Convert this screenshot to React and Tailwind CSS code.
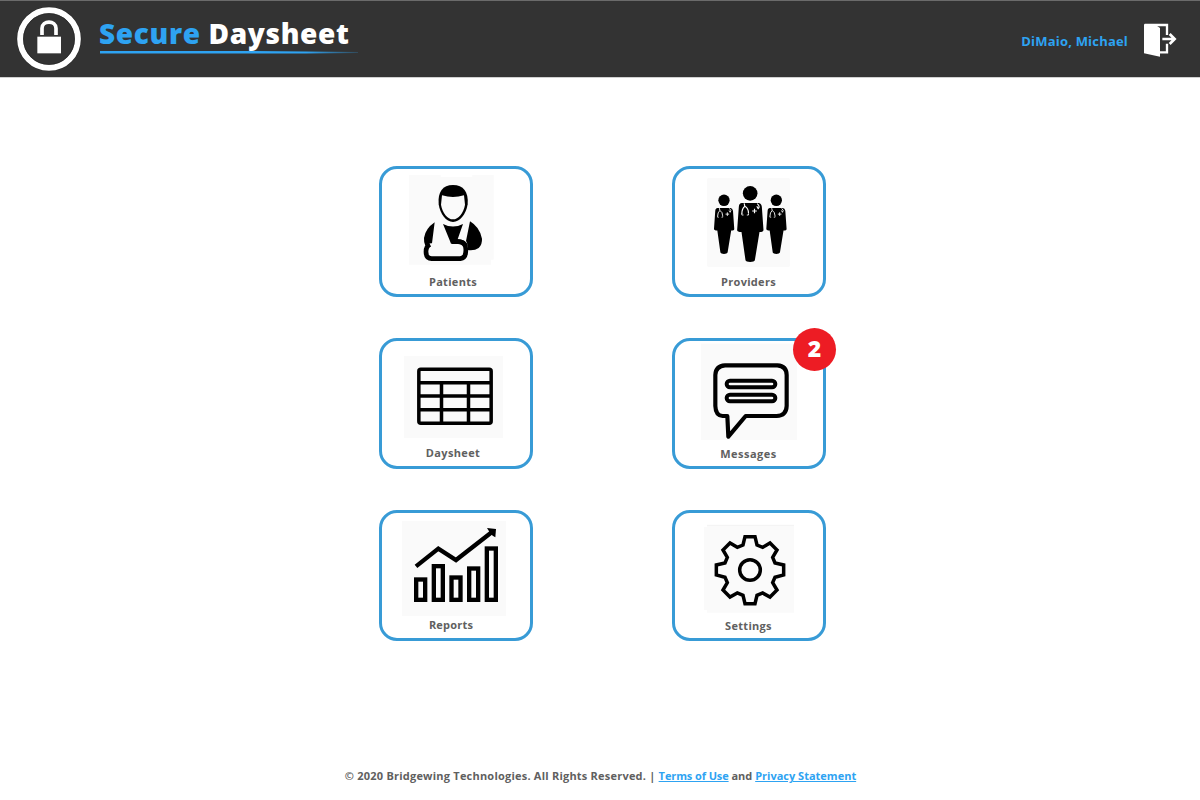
import React from "react";

function LockLogo() {
  return (
    <svg className="h-[66px] w-[66px] shrink-0" viewBox="48 18 198 198">
      <circle cx="147" cy="117" r="97" fill="#222" />
      <circle cx="147" cy="117" r="86.5" fill="#333" stroke="#fff" strokeWidth="18" />
      <circle cx="147" cy="117" r="76.5" fill="none" stroke="#222" strokeWidth="2" />
      <path d="M126 105 V85 C126 60 168 60 168 85 V105" fill="none" stroke="#fff" strokeWidth="11" />
      <path d="M112 110 H183 V160 H112Z" fill="#fff" />
    </svg>
  );
}

function ExitIcon() {
  return (
    <svg className="h-[34px] w-[34px]" viewBox="429 69 102 102">
      <path d="M434 75 H501 V105 M501 131 V157 H478" fill="none" stroke="#fff" strokeWidth="7" />
      <path d="M432 73 H464 L480 84 V170 L432 160Z" fill="#fff" />
      <path d="M487 117 H522 M509 102 L524 117 L509 132" fill="none" stroke="#fff" strokeWidth="8" />
    </svg>
  );
}

function PatientsIcon() {
  return (
    <svg className="h-[105px] w-[148px]" viewBox="36 42 444 315">
      <path d="M117 60 H212 V66 H307 V60 H371 V314 H363 V329 H117Z" fill="#fafafa" />
      <path d="M206 148 C203 110 218 90 249 90 C280 90 296 110 293 148 C288 178 270 201 249 201 C228 201 211 178 206 148Z" />
      <path d="M216 121 Q249 131 282 121 L285 149 C281 174 265 193 249 193 C233 193 217 174 213 149Z" fill="#fafafa" />
      <path d="M194 202 Q166 221 162 249 Q161 260 166 272 Q175 264 186 265Z" />
      <path d="M300 199 Q329 216 336 251 Q337 268 326 279 Q313 288 293 285 Q294 265 288 258Z" />
      <path d="M219 207 Q249 222 279 207 L263 253 Q286 252 294 271 L282 277 Q276 266 264 266 H243 L239 256Z" />
      <path d="M180 268 Q168 274 168 290 Q168 311 185 311 H271 Q286 309 287 292 Q291 260 264 260 H246" fill="none" stroke="#000" strokeWidth="14" strokeLinejoin="round" />
    </svg>
  );
}

function ProviderFigure({ transform }) {
  return (
    <g transform={transform}>
      <circle cx="0" cy="-91" r="22" />
      <path d="M-25 -62 H25 Q33 -62 35 -51 L40 19 Q40 25 28 25 L14 110 Q12 115 0 115 Q-12 115 -14 110 L-26 25 Q-40 25 -39 18 L-34 -51 Q-33 -62 -25 -62Z" />
      <path d="M-18 -61 L-16 -52 Q-25 -45 -25 -29 M-16 -52 Q-5 -46 -5 -31 M21 -60 Q31 -52 24 -45 L20 -52 M13 -45 V-31 M6 -38 H20" fill="none" stroke="#f9f9f9" strokeWidth="3.5" />
      <path d="M-25 -31 V-26 H-20 M-5 -31 V-26 H-10" fill="none" stroke="#ddd" strokeWidth="3" />
    </g>
  );
}

function ProvidersIcon() {
  return (
    <svg className="h-[105px] w-[148px]" viewBox="45 42 444 315">
      <rect x="141" y="69" width="249" height="267" rx="6" fill="#fafafa" />
      <ProviderFigure transform="translate(192 207) scale(.77 .78)" />
      <ProviderFigure transform="translate(349 207) scale(.77 .78)" />
      <ProviderFigure transform="translate(270.5 206)" />
    </svg>
  );
}

function DaysheetIcon() {
  return (
    <svg className="h-[105px] w-[148px]" viewBox="36 48 444 315">
      <rect x="102" y="93" width="297" height="246" fill="#fafafa" />
      <g fill="none" stroke="#000" strokeWidth="10.5">
        <rect x="146.500" y="132.500" width="217" height="162" rx="6" fill="#fafafa" />
        <path d="M147 173 H364 M147 213 H364 M147 254 H364 M214.500 173 V294 M295.500 173 V294" />
      </g>
    </svg>
  );
}

function MessagesIcon() {
  return (
    <svg className="h-[105px] w-[148px]" viewBox="45 63 444 315">
      <rect x="123" y="71" width="288" height="289" fill="#fafafa" />
      <g fill="none" stroke="#000" strokeWidth="12.5" strokeLinejoin="round">
        <path d="M195 136 H352 Q380 138 380 165 V258 Q379 287 350 288 H257 L205 350 L202 288 H188 Q167 287 166 258 V165 Q167 138 195 136Z" />
        <rect x="200" y="182" width="146" height="20" rx="10" strokeWidth="12" />
        <rect x="200" y="224" width="146" height="20" rx="10" strokeWidth="12" />
      </g>
    </svg>
  );
}

function ReportsIcon() {
  return (
    <svg className="h-[105px] w-[148px]" viewBox="36 39 444 315">
      <rect x="96" y="63" width="312" height="285" fill="#fafafa" />
      <g fill="none" stroke="#000" strokeWidth="13">
        <rect x="138.500" y="238.500" width="27" height="61" />
        <rect x="191.500" y="198.500" width="27" height="101" />
        <rect x="244.500" y="232.500" width="27" height="67" />
        <rect x="297.500" y="205.500" width="27" height="94" />
        <rect x="350.500" y="145.500" width="27" height="154" />
        <path d="M138 199 L205 146 L258 180 L365 97" />
      </g>
      <path d="M351 84 L378 87 L376 112 L368 107 L357 94Z" />
    </svg>
  );
}

function SettingsIcon() {
  return (
    <svg className="h-[105px] w-[148px]" viewBox="45 39 444 315">
      <path d="M141 75 H402 V338 H141 V330 H132 V81 H141Z" fill="#fafafa" />
      <path d="M141 76 H402" stroke="#f3f3f3" strokeWidth="3" />
      <g fill="none" stroke="#000" strokeWidth="10.5">
        <path d="M255 110 H285 L291 135 L308 142 L330 129 L351 150 L338 172 L345 189 L371 195 V225 L345 232 L338 248 L351 270 L330 291 L308 279 L291 286 L285 311 H255 L249 286 L232 279 L210 291 L189 270 L202 248 L195 232 L169 225 V195 L195 189 L202 172 L189 150 L210 129 L232 142 L249 135Z" />
        <circle cx="270" cy="210" r="31" />
      </g>
    </svg>
  );
}

const tiles = [
  { label: "Patients", Icon: PatientsIcon, labelClass: "pr-[6px] tracking-[0.3px]" },
  { label: "Providers", Icon: ProvidersIcon, labelClass: "pr-px tracking-[0.3px]" },
  { label: "Daysheet", Icon: DaysheetIcon, labelClass: "pr-[6px] -mt-px tracking-[0.35px]" },
  { label: "Messages", Icon: MessagesIcon, labelClass: "pr-px tracking-[0.5px]", badge: 2 },
  { label: "Reports", Icon: ReportsIcon, labelClass: "pr-[10px] -mt-px tracking-[0.2px]" },
  { label: "Settings", Icon: SettingsIcon, labelClass: "pr-px tracking-[0.3px]" },
];

function Tile({ label, Icon, labelClass, badge }) {
  return (
    <button className="relative flex h-[131px] w-[154px] flex-col rounded-[18px] border-[3px] border-[#389bd6] bg-white">
      <Icon />
      <span className={`block w-full text-center text-[11px] leading-4 font-bold text-[#606060] ${labelClass}`}>
        {label}
      </span>
      {badge && (
        <span className="absolute -top-[13px] -right-[13px] flex h-[43px] w-[43px] items-center justify-center rounded-full bg-[#ed1c24] pb-[2px] text-[23px] font-extrabold text-white">
          {badge}
        </span>
      )}
    </button>
  );
}

export default function App() {
  return (
    <div className="flex h-[800px] w-[1200px] flex-col overflow-hidden bg-white font-['Open_Sans',sans-serif]">
      <header className="flex h-[78px] shrink-0 items-start justify-between border-t border-b border-t-[#6b6b6b] border-b-[#d0d0d0] bg-[#333]">
        <div className="flex items-start pt-[5px] pl-4">
          <LockLogo />
          <div className="ml-[17px] w-[260px] pt-[9px]">
            <h1 className="h-9 text-[28px] leading-9 font-extrabold tracking-[0.64px] whitespace-nowrap text-white">
              <span className="text-[#2ea3f2]">Secure</span> Daysheet
            </h1>
            <svg className="ml-px h-[3px] w-[258px]" viewBox="0 0 258 3">
              <defs>
                <linearGradient id="rule" x1="0" x2="1">
                  <stop offset=".8" stopColor="#2ea3f2" />
                  <stop offset="1" stopColor="#2ea3f2" stopOpacity=".2" />
                </linearGradient>
              </defs>
              <path d="M0 0 H145 L258 1 V2 L205 2.500 H0Z" fill="url(#rule)" />
            </svg>
          </div>
        </div>
        <div className="flex items-start pr-[23px]">
          <span className="mt-[30px] mr-[15px] text-[13px] leading-5 font-bold tracking-[0.2px] text-[#2ea3f2]">DiMaio, Michael</span>
          <button className="mt-[22px]" aria-label="Log out"><ExitIcon /></button>
        </div>
      </header>
      <main className="grid grid-cols-[154px_154px] content-start gap-x-[139px] gap-y-[41px] pt-[88px] pl-[379px]">
        {tiles.map((tile) => (
          <Tile key={tile.label} {...tile} />
        ))}
      </main>
      <footer className="mt-auto pb-4 pl-px text-center text-[11px] leading-4 font-bold whitespace-nowrap text-[#606060]">
        <span className="tracking-[0.22px]">© 2020 Bridgewing Technologies. All Rights Reserved. | </span>
        <a href="#terms" className="tracking-[-0.1px] text-[#2ea3f2] underline">Terms of Use</a> and{" "}
        <a href="#privacy" className="text-[#2ea3f2] underline">Privacy Statement</a>
      </footer>
    </div>
  );
}
